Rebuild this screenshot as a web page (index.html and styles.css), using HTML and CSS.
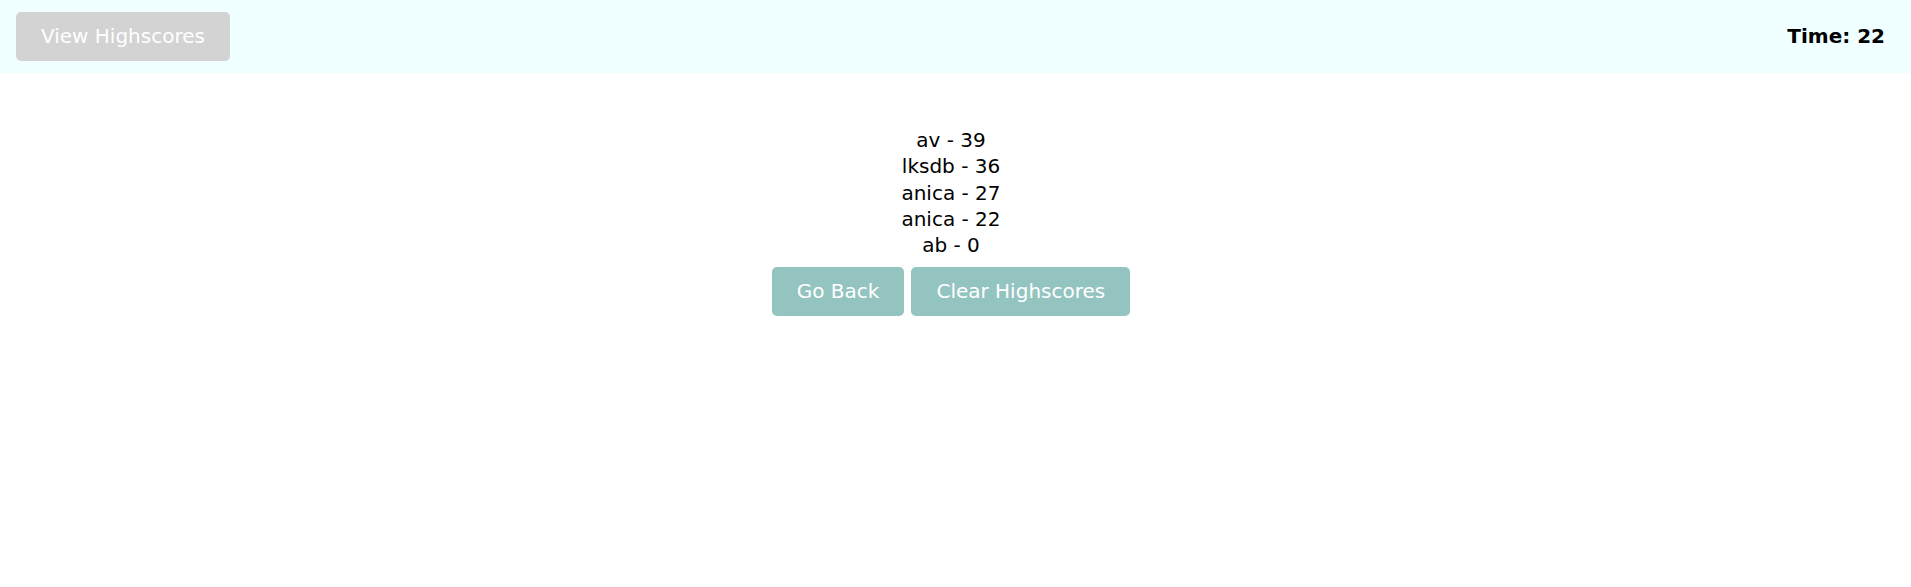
FILE: index.html
```html
<!DOCTYPE html>
<html lang="en">
<head>
<meta charset="utf-8">
<title>Highscores</title>
<link rel="stylesheet" href="styles.css">
</head>
<body>
<header class="topbar">
  <button class="btn btn-gray">View Highscores</button>
  <div class="timer">Time: 22</div>
</header>
<main class="scores">
  <ol class="score-list">
    <li>av - 39</li>
    <li>lksdb - 36</li>
    <li>anica - 27</li>
    <li>anica - 22</li>
    <li>ab - 0</li>
  </ol>
  <div class="actions">
    <button class="btn btn-teal">Go Back</button>
    <button class="btn btn-teal">Clear Highscores</button>
  </div>
</main>
</body>
</html>
```

FILE: styles.css
```css
html, body {
  margin: 0;
  padding: 0;
  background: #ffffff;
  font-family: "DejaVu Sans", Verdana, sans-serif;
  font-size: 20px;
  color: #000000;
}

.topbar {
  display: flex;
  justify-content: space-between;
  align-items: flex-start;
  height: 73px;
  box-sizing: border-box;
  padding: 12px 26px 0 16px;
  background: #f0ffff;
}

.btn {
  font-family: "DejaVu Sans", Verdana, sans-serif;
  font-size: 20px;
  line-height: 25px;
  padding: 12px 25px;
  border: none;
  border-radius: 5px;
  color: #ffffff;
  cursor: pointer;
}

.btn-gray {
  background: #d3d3d3;
}

.btn-teal {
  background: #94c4c0;
}

.timer {
  font-weight: bold;
  font-size: 20px;
  line-height: 49px;
}

.scores {
  display: flex;
  flex-direction: column;
  align-items: center;
  padding: 54px 9px 0 0;
}

.score-list {
  list-style: none;
  margin: 0;
  padding: 0;
  text-align: center;
  line-height: 26.25px;
}

.actions {
  display: flex;
  gap: 7px;
  margin-top: 9px;
}
```
